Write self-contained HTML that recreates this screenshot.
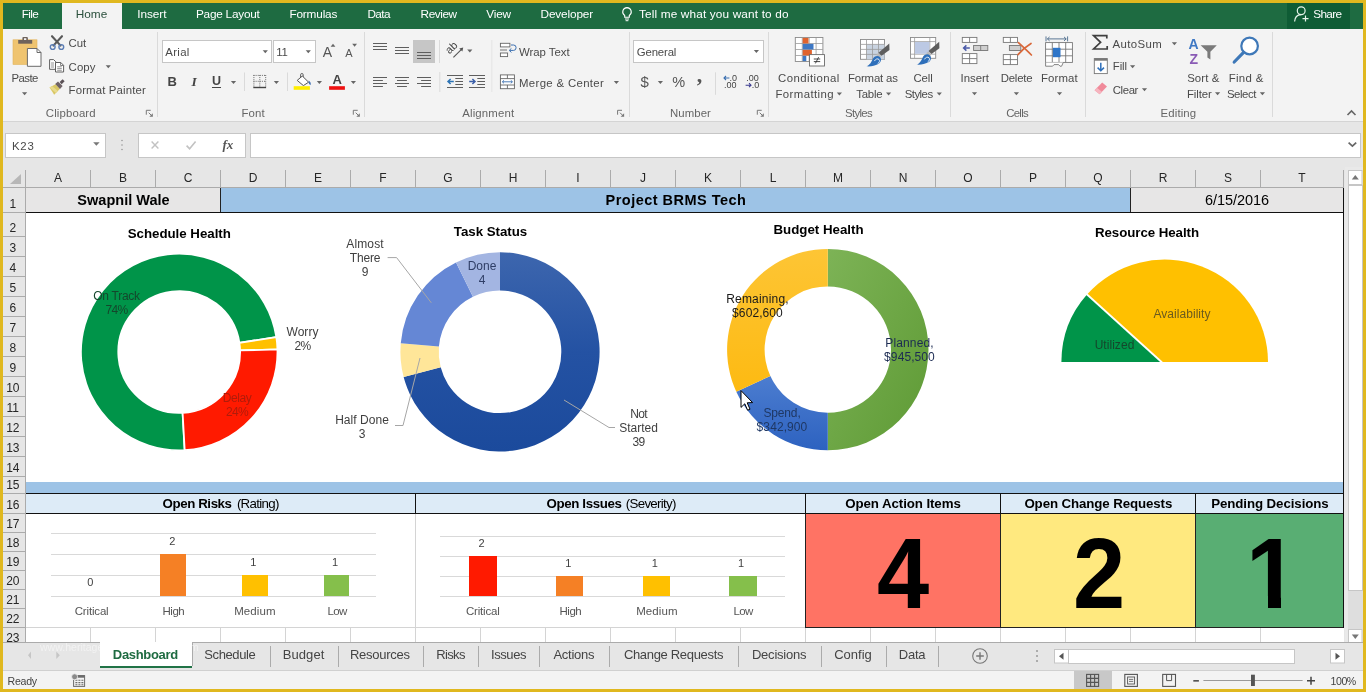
<!DOCTYPE html>
<html lang="en"><head><meta charset="utf-8"><title>Project BRMS Tech - Dashboard - Excel</title>
<style>
html,body{margin:0;padding:0;}
body{width:1366px;height:692px;overflow:hidden;background:#E0B81F;font-family:"Liberation Sans",sans-serif;}
#app{position:absolute;left:0;top:0;width:1366px;height:692px;overflow:hidden;will-change:transform;}
#app div,#app svg{position:absolute;}
.t{white-space:nowrap;}
</style></head>
<body>
<div id="app">
<div style="left:3.0px;top:3.0px;width:1360.0px;height:686.0px;background:#E6E6E6;"></div>
<div style="left:3.0px;top:3.0px;width:1360.0px;height:25.5px;background:#1E6B41;"></div>
<div style="left:3.0px;top:3.0px;width:59.0px;height:25.5px;background:#1F6E43;"></div>
<div style="left:62.0px;top:3.0px;width:60.0px;height:26.0px;background:#F3F3F3;"></div>
<div class="t" style="top:6.0px;font-size:11.8px;line-height:16px;color:#fff;letter-spacing:-0.683px;left:-120.1px;width:300px;text-align:center;"><span id="t1">File</span></div>
<div class="t" style="top:6.0px;font-size:11.8px;line-height:16px;color:#2A4F3C;letter-spacing:0.064px;left:-58.5px;width:300px;text-align:center;"><span id="t2">Home</span></div>
<div class="t" style="top:6.0px;font-size:11.8px;line-height:16px;color:#fff;letter-spacing:-0.065px;left:1.9px;width:300px;text-align:center;"><span id="t3">Insert</span></div>
<div class="t" style="top:6.0px;font-size:11.8px;line-height:16px;color:#fff;letter-spacing:-0.227px;left:77.8px;width:300px;text-align:center;"><span id="t4">Page Layout</span></div>
<div class="t" style="top:6.0px;font-size:11.8px;line-height:16px;color:#fff;letter-spacing:-0.166px;left:163.3px;width:300px;text-align:center;"><span id="t5">Formulas</span></div>
<div class="t" style="top:6.0px;font-size:11.8px;line-height:16px;color:#fff;letter-spacing:-0.586px;left:228.7px;width:300px;text-align:center;"><span id="t6">Data</span></div>
<div class="t" style="top:6.0px;font-size:11.8px;line-height:16px;color:#fff;letter-spacing:-0.452px;left:288.6px;width:300px;text-align:center;"><span id="t7">Review</span></div>
<div class="t" style="top:6.0px;font-size:11.8px;line-height:16px;color:#fff;letter-spacing:-0.179px;left:348.6px;width:300px;text-align:center;"><span id="t8">View</span></div>
<div class="t" style="top:6.0px;font-size:11.8px;line-height:16px;color:#fff;letter-spacing:-0.143px;left:416.8px;width:300px;text-align:center;"><span id="t9">Developer</span></div>
<div class="t" style="top:6.0px;font-size:11.8px;line-height:16px;color:#fff;letter-spacing:0.150px;left:639.0px;"><span id="t10">Tell me what you want to do</span></div>
<div style="left:1287.0px;top:3.0px;width:63.0px;height:25.5px;background:#0F5C35;"></div>
<div class="t" style="top:6.0px;font-size:11.8px;line-height:16px;color:#fff;letter-spacing:-0.700px;left:1313.3px;"><span id="t11">Share</span></div>
<div style="left:3.0px;top:28.5px;width:1360.0px;height:92.5px;background:#F3F3F3;"></div>
<div style="left:3.0px;top:120.5px;width:1360.0px;height:1.0px;background:#D4D4D4;"></div>
<div style="left:157.3px;top:32.0px;width:1.0px;height:85.0px;background:#DADADA;"></div>
<div style="left:363.5px;top:32.0px;width:1.0px;height:85.0px;background:#DADADA;"></div>
<div style="left:628.5px;top:32.0px;width:1.0px;height:85.0px;background:#DADADA;"></div>
<div style="left:768.3px;top:32.0px;width:1.0px;height:85.0px;background:#DADADA;"></div>
<div style="left:949.5px;top:32.0px;width:1.0px;height:85.0px;background:#DADADA;"></div>
<div style="left:1085.3px;top:32.0px;width:1.0px;height:85.0px;background:#DADADA;"></div>
<div style="left:1272.0px;top:32.0px;width:1.0px;height:85.0px;background:#DADADA;"></div>
<div class="t" style="top:70.0px;font-size:11.4px;line-height:16px;color:#4A4A4A;letter-spacing:-0.573px;left:-125.3px;width:300px;text-align:center;"><span id="t12">Paste</span></div>
<div class="t" style="top:35.4px;font-size:11.4px;line-height:16px;color:#4A4A4A;letter-spacing:-0.080px;left:68.6px;"><span id="t13">Cut</span></div>
<div class="t" style="top:59.0px;font-size:11.4px;line-height:16px;color:#4A4A4A;letter-spacing:0.101px;left:68.6px;"><span id="t14">Copy</span></div>
<div class="t" style="top:82.0px;font-size:11.4px;line-height:16px;color:#4A4A4A;letter-spacing:0.143px;left:68.6px;"><span id="t15">Format Painter</span></div>
<div class="t" style="top:104.8px;font-size:11.4px;line-height:16px;color:#666;letter-spacing:0.135px;left:45.8px;"><span id="t16">Clipboard</span></div>
<div style="left:162.3px;top:40.0px;width:110.2px;height:22.7px;background:#fff;border:1px solid #C6C6C6;box-sizing:border-box;"></div>
<div style="left:272.5px;top:40.0px;width:43.2px;height:22.7px;background:#fff;border:1px solid #C6C6C6;box-sizing:border-box;"></div>
<div class="t" style="top:43.8px;font-size:11.4px;line-height:16px;color:#4A4A4A;letter-spacing:0.311px;left:165.3px;"><span id="t17">Arial</span></div>
<div class="t" style="top:43.8px;font-size:11.4px;line-height:16px;color:#4A4A4A;letter-spacing:-0.189px;left:276.2px;"><span id="t18">11</span></div>
<div class="t" style="top:104.8px;font-size:11.4px;line-height:16px;color:#666;letter-spacing:0.124px;left:103.2px;width:300px;text-align:center;"><span id="t19">Font</span></div>
<div style="left:413.0px;top:40.0px;width:22.0px;height:23.0px;background:#C6C6C6;"></div>
<div class="t" style="top:44.0px;font-size:11.4px;line-height:16px;color:#4A4A4A;letter-spacing:-0.037px;left:519.0px;"><span id="t20">Wrap Text</span></div>
<div class="t" style="top:74.5px;font-size:11.4px;line-height:16px;color:#4A4A4A;letter-spacing:0.338px;left:519.0px;"><span id="t21">Merge &amp; Center</span></div>
<div class="t" style="top:104.8px;font-size:11.4px;line-height:16px;color:#666;letter-spacing:0.164px;left:338.3px;width:300px;text-align:center;"><span id="t22">Alignment</span></div>
<div style="left:633.2px;top:40.0px;width:130.4px;height:22.7px;background:#fff;border:1px solid #C6C6C6;box-sizing:border-box;"></div>
<div class="t" style="top:43.8px;font-size:11.4px;line-height:16px;color:#4A4A4A;letter-spacing:-0.165px;left:636.8px;"><span id="t23">General</span></div>
<div class="t" style="top:104.8px;font-size:11.4px;line-height:16px;color:#666;letter-spacing:0.056px;left:540.5px;width:300px;text-align:center;"><span id="t24">Number</span></div>
<div class="t" style="top:70.0px;font-size:11.4px;line-height:16px;color:#4A4A4A;letter-spacing:0.414px;left:658.9px;width:300px;text-align:center;"><span id="t25">Conditional</span></div>
<div class="t" style="top:85.6px;font-size:11.4px;line-height:16px;color:#4A4A4A;letter-spacing:0.400px;left:775.5px;"><span id="t26">Formatting</span></div>
<div class="t" style="top:70.0px;font-size:11.4px;line-height:16px;color:#4A4A4A;letter-spacing:-0.147px;left:722.9px;width:300px;text-align:center;"><span id="t27">Format as</span></div>
<div class="t" style="top:85.6px;font-size:11.4px;line-height:16px;color:#4A4A4A;letter-spacing:-0.224px;left:719.3px;width:300px;text-align:center;"><span id="t28">Table</span></div>
<div class="t" style="top:70.0px;font-size:11.4px;line-height:16px;color:#4A4A4A;letter-spacing:-0.131px;left:773.0px;width:300px;text-align:center;"><span id="t29">Cell</span></div>
<div class="t" style="top:85.6px;font-size:11.4px;line-height:16px;color:#4A4A4A;letter-spacing:-0.525px;left:904.7px;"><span id="t30">Styles</span></div>
<div class="t" style="top:104.8px;font-size:11.4px;line-height:16px;color:#666;letter-spacing:-0.700px;left:708.5px;width:300px;text-align:center;"><span id="t31">Styles</span></div>
<div class="t" style="top:70.0px;font-size:11.4px;line-height:16px;color:#4A4A4A;letter-spacing:-0.005px;left:824.8px;width:300px;text-align:center;"><span id="t32">Insert</span></div>
<div class="t" style="top:70.0px;font-size:11.4px;line-height:16px;color:#4A4A4A;letter-spacing:-0.218px;left:866.5px;width:300px;text-align:center;"><span id="t33">Delete</span></div>
<div class="t" style="top:70.0px;font-size:11.4px;line-height:16px;color:#4A4A4A;letter-spacing:0.118px;left:909.4px;width:300px;text-align:center;"><span id="t34">Format</span></div>
<div class="t" style="top:104.8px;font-size:11.4px;line-height:16px;color:#666;letter-spacing:-0.700px;left:867.1px;width:300px;text-align:center;"><span id="t35">Cells</span></div>
<div class="t" style="top:35.6px;font-size:11.4px;line-height:16px;color:#4A4A4A;letter-spacing:0.406px;left:1112.4px;"><span id="t36">AutoSum</span></div>
<div class="t" style="top:58.4px;font-size:11.4px;line-height:16px;color:#4A4A4A;letter-spacing:-0.106px;left:1112.8px;"><span id="t37">Fill</span></div>
<div class="t" style="top:81.7px;font-size:11.4px;line-height:16px;color:#4A4A4A;letter-spacing:-0.407px;left:1112.8px;"><span id="t38">Clear</span></div>
<div class="t" style="top:70.0px;font-size:11.4px;line-height:16px;color:#4A4A4A;letter-spacing:0.109px;left:1053.3px;width:300px;text-align:center;"><span id="t39">Sort &amp;</span></div>
<div class="t" style="top:85.6px;font-size:11.4px;line-height:16px;color:#4A4A4A;letter-spacing:-0.124px;left:1187.0px;"><span id="t40">Filter</span></div>
<div class="t" style="top:70.0px;font-size:11.4px;line-height:16px;color:#4A4A4A;letter-spacing:0.355px;left:1096.2px;width:300px;text-align:center;"><span id="t41">Find &amp;</span></div>
<div class="t" style="top:85.6px;font-size:11.4px;line-height:16px;color:#4A4A4A;letter-spacing:-0.439px;left:1226.9px;"><span id="t42">Select</span></div>
<div class="t" style="top:104.8px;font-size:11.4px;line-height:16px;color:#666;letter-spacing:0.118px;left:1028.4px;width:300px;text-align:center;"><span id="t43">Editing</span></div>
<div style="left:5.3px;top:132.5px;width:100.7px;height:25.0px;background:#fff;border:1px solid #C6C6C6;box-sizing:border-box;"></div>
<div class="t" style="top:137.6px;font-size:11.4px;line-height:16px;color:#4A4A4A;letter-spacing:0.734px;left:12.0px;"><span id="t44">K23</span></div>
<div style="left:137.6px;top:132.5px;width:108.2px;height:25.0px;background:#fff;border:1px solid #C6C6C6;box-sizing:border-box;"></div>
<div style="left:250.0px;top:132.5px;width:1110.5px;height:25.0px;background:#fff;border:1px solid #C6C6C6;box-sizing:border-box;"></div>
<div class="t" style="top:137.0px;font-size:13px;line-height:16px;color:#555;font-weight:bold;font-style:italic;font-family:'Liberation Serif',serif;left:222.5px;"><span id="t45">fx</span></div>
<svg style="left:0.0px;top:0.0px;" width="1366" height="170" viewBox="0 0 1366 170"><path d="M627 7.6 a4.3 4.3 0 0 1 2.3 7.9 v1.7 h-4.6 v-1.7 a4.3 4.3 0 0 1 2.3 -7.9 Z" fill="none" stroke="#fff" stroke-width="1.1"/><path d="M625 19 h4 M625.6 20.7 h2.8" stroke="#fff" stroke-width="1"/><circle cx="1301.2" cy="10.8" r="3.9" fill="none" stroke="#E8F5EC" stroke-width="1.2"/><path d="M1294.6 21.5 c0.3 -4.2 3 -6.6 6.4 -6.8" fill="none" stroke="#E8F5EC" stroke-width="1.2"/><path d="M1305.5 15.6 v6 M1302.5 18.6 h6" stroke="#E8F5EC" stroke-width="1.2"/><path d="M1347.5 115 L1351.5 111 L1355.5 115" fill="none" stroke="#666" stroke-width="1.6"/><rect x="13" y="39.8" width="24" height="24.7" fill="#EFC470"/><rect x="13" y="39.8" width="24" height="24.7" fill="none" stroke="#E2B45C" stroke-width="0.6"/><rect x="18.2" y="40" width="14" height="3.7" fill="#6F635C"/><rect x="22.4" y="37" width="5.5" height="4" rx="1" fill="#6F635C"/><rect x="24" y="38.2" width="2.3" height="1.8" fill="#F1F1F1"/><path d="M27.4 48.5 H37 L41 52.5 V66.3 H27.4 Z" fill="#fff" stroke="#6B6B6B" stroke-width="1"/><path d="M37 48.5 V52.5 H41" fill="none" stroke="#6B6B6B" stroke-width="1"/><path d="M22.0 92.2 H27.2 L24.6 95.2 Z" fill="#666"/><path d="M52 36.2 L60.6 45.6 M62 36.2 L53.4 45.6" stroke="#585858" stroke-width="2.1" stroke-linecap="round"/><circle cx="52.7" cy="47" r="2.4" fill="none" stroke="#5B7DB5" stroke-width="1.4"/><circle cx="61.3" cy="47" r="2.4" fill="none" stroke="#5B7DB5" stroke-width="1.4"/><path d="M49.6 59.6 H53.6 L55.8 61.8 V69.3 H49.6 Z" fill="#fff" stroke="#5F5F5F" stroke-width="1"/><path d="M51 63 h3 M51 65 h3 M51 67 h3" stroke="#7a7a7a" stroke-width="0.8"/><path d="M55.5 62.5 H60.8 L63.6 65.3 V72 H55.5 Z" fill="#fff" stroke="#5F5F5F" stroke-width="1"/><path d="M60.6 62.7 V65.5 H63.4" fill="none" stroke="#5F5F5F" stroke-width="0.8"/><path d="M57.2 66.8 h4.6 M57.2 68.6 h4.6 M57.2 70.3 h4.6" stroke="#7a7a7a" stroke-width="0.8"/><path d="M105.7 65.2 H110.9 L108.3 68.2 Z" fill="#666"/><path d="M49.5 87.5 L55.5 84.2 L60 88.8 L54.2 94.8 Z" fill="#D9C765"/><path d="M49.5 87.5 L52 86.1 L57.8 91 L56 93 Z" fill="#E8DB8E"/><path d="M55.2 84 L58 81.4 L62.6 86 L60 88.9 Z" fill="#6E6266"/><path d="M59.6 82 L62.6 79.2 L64.6 81.2 L61.7 84.2 Z" fill="#5B5156"/><path d="M146.3 114.7 V110.3 H150.7" fill="none" stroke="#777" stroke-width="1"/><path d="M148.7 112.7 L152.1 116.1" stroke="#777" stroke-width="1"/><path d="M152.8 113.3 V116.8 H149.3 Z" fill="#777"/><path d="M262.7 50.3 H267.9 L265.3 53.3 Z" fill="#666"/><path d="M305.7 50.3 H310.9 L308.3 53.3 Z" fill="#666"/><path d="M230.9 81.1 H236.1 L233.5 84.1 Z" fill="#666"/><path d="M273.8 81.1 H279.0 L276.4 84.1 Z" fill="#666"/><path d="M316.8 81.1 H322.0 L319.4 84.1 Z" fill="#666"/><path d="M350.8 81.1 H356.0 L353.4 84.1 Z" fill="#666"/><path d="M333 43.8 l2.4 3 h-4.8 Z" fill="#666"/><path d="M354.6 46.8 l2.4 -3 h-4.8 Z" fill="#666"/><rect x="244" y="72.5" width="1" height="18.5" fill="#DADADA"/><rect x="287" y="72.5" width="1" height="18.5" fill="#DADADA"/><g stroke="#6b6b6b" stroke-width="1" stroke-dasharray="1 1.1"><path d="M253.5 75.4 H266 M253.5 81.3 H266 M253.9 75 V87 M259.8 75 V87 M265.7 75 V87"/></g><rect x="253.3" y="86.8" width="12.8" height="1.4" fill="#444"/><path d="M302.3 76 L308.6 82.2 L303.4 85.6 L297.2 80.4 Z" fill="#fff" stroke="#555" stroke-width="1"/><path d="M300.6 77.8 V74.8 a1.3 1.3 0 0 1 2.6 0 V77" fill="none" stroke="#555" stroke-width="0.9"/><path d="M308.6 80.4 c1.8 1.2 2.6 2.8 2 4.6 c-1.4 -0.4 -2.2 -2 -2 -4.6 Z" fill="#3D6FB4"/><rect x="293.7" y="86.2" width="16.2" height="3.6" fill="#FFEE00"/><rect x="329.1" y="86.2" width="15.8" height="3.6" fill="#EE1111"/><path d="M353.3 114.7 V110.3 H357.7" fill="none" stroke="#777" stroke-width="1"/><path d="M355.7 112.7 L359.1 116.1" stroke="#777" stroke-width="1"/><path d="M359.8 113.3 V116.8 H356.3 Z" fill="#777"/><rect x="373.0" y="43" width="14.0" height="1" fill="#5E5E5E"/><rect x="373.0" y="46" width="14.0" height="1" fill="#5E5E5E"/><rect x="373.0" y="49" width="14.0" height="1" fill="#5E5E5E"/><rect x="395.0" y="47" width="14.0" height="1" fill="#5E5E5E"/><rect x="395.0" y="50" width="14.0" height="1" fill="#5E5E5E"/><rect x="395.0" y="53" width="14.0" height="1" fill="#5E5E5E"/><rect x="417.0" y="52" width="14.0" height="1" fill="#5E5E5E"/><rect x="417.0" y="55" width="14.0" height="1" fill="#5E5E5E"/><rect x="417.0" y="58" width="14.0" height="1" fill="#5E5E5E"/><rect x="373.0" y="77" width="14.0" height="1" fill="#5E5E5E"/><rect x="373.0" y="80" width="9.9" height="1" fill="#5E5E5E"/><rect x="373.0" y="83" width="14.0" height="1" fill="#5E5E5E"/><rect x="373.0" y="86" width="9.9" height="1" fill="#5E5E5E"/><rect x="395.0" y="77" width="14.0" height="1" fill="#5E5E5E"/><rect x="397.0" y="80" width="9.9" height="1" fill="#5E5E5E"/><rect x="395.0" y="83" width="14.0" height="1" fill="#5E5E5E"/><rect x="397.0" y="86" width="9.9" height="1" fill="#5E5E5E"/><rect x="417.0" y="77" width="14.0" height="1" fill="#5E5E5E"/><rect x="421.1" y="80" width="9.9" height="1" fill="#5E5E5E"/><rect x="417.0" y="83" width="14.0" height="1" fill="#5E5E5E"/><rect x="421.1" y="86" width="9.9" height="1" fill="#5E5E5E"/><rect x="439" y="40" width="1" height="23" fill="#DADADA"/><rect x="439.3" y="72" width="1" height="20" fill="#DADADA"/><rect x="491.3" y="40" width="1" height="52" fill="#E4E4E4"/><path d="M453.4 57.4 L462 48.8" stroke="#555" stroke-width="1.1"/><path d="M463.2 47.6 L459.2 48.4 L462.4 51.6 Z" fill="#555"/><path d="M467.2 49.5 H472.4 L469.8 52.5 Z" fill="#666"/><rect x="447.0" y="75" width="16.0" height="1" fill="#5E5E5E"/><rect x="447.0" y="87" width="16.0" height="1" fill="#5E5E5E"/><rect x="455.3" y="78" width="7.7" height="1" fill="#5E5E5E"/><rect x="455.3" y="81" width="7.7" height="1" fill="#5E5E5E"/><rect x="455.3" y="84" width="7.7" height="1" fill="#5E5E5E"/><path d="M453.8 81.5 H448.2 M450.6 79 L448 81.5 L450.6 84" fill="none" stroke="#2E75B6" stroke-width="1.5"/><rect x="469.0" y="75" width="16.0" height="1" fill="#5E5E5E"/><rect x="469.0" y="87" width="16.0" height="1" fill="#5E5E5E"/><rect x="477.3" y="78" width="7.7" height="1" fill="#5E5E5E"/><rect x="477.3" y="81" width="7.7" height="1" fill="#5E5E5E"/><rect x="477.3" y="84" width="7.7" height="1" fill="#5E5E5E"/><path d="M469.2 81.5 H474.8 M472.4 79 L475 81.5 L472.4 84" fill="none" stroke="#3B5FA8" stroke-width="1.5"/><rect x="500.4" y="43.3" width="9.5" height="3.6" fill="#fff" stroke="#666" stroke-width="0.9"/><rect x="500.4" y="53" width="7.2" height="3.6" fill="#fff" stroke="#666" stroke-width="0.9"/><path d="M500 50 H507" stroke="#666" stroke-width="0.9"/><path d="M511 45 H513.6 a2.4 2.6 0 0 1 0 5.4 H510" fill="none" stroke="#3B6FB0" stroke-width="1"/><path d="M511.4 48.4 L509.2 50.4 L511.4 52.4" fill="none" stroke="#3B6FB0" stroke-width="1"/><rect x="500.4" y="74.9" width="14" height="13.8" fill="#fff" stroke="#666" stroke-width="0.9"/><path d="M500.4 78.6 H514.4 M500.4 85 H514.4 M507.4 74.9 V78.6 M507.4 85 V88.7" stroke="#666" stroke-width="0.9"/><path d="M502.4 81.8 H512.4 M504 80.3 L502.4 81.8 L504 83.3 M510.8 80.3 L512.4 81.8 L510.8 83.3" fill="none" stroke="#3B6FB0" stroke-width="0.9"/><path d="M613.8 81.1 H619.0 L616.4 84.1 Z" fill="#666"/><path d="M617.5999999999999 114.7 V110.3 H622.0" fill="none" stroke="#777" stroke-width="1"/><path d="M620.0 112.7 L623.4 116.1" stroke="#777" stroke-width="1"/><path d="M624.0999999999999 113.3 V116.8 H620.5999999999999 Z" fill="#777"/><path d="M753.8 50.1 H759.0 L756.4 53.1 Z" fill="#666"/><path d="M657.8 80.9 H663.0 L660.4 83.9 Z" fill="#666"/><rect x="715" y="72.3" width="1" height="22.5" fill="#DADADA"/><path d="M724 78 H729.4 M726 76 L724 78 L726 80" fill="none" stroke="#3B6FB0" stroke-width="1.1"/><path d="M745.6 85.2 H751 M749 83.2 L751 85.2 L749 87.2" fill="none" stroke="#3B3B90" stroke-width="1.1"/><path d="M757.3 114.7 V110.3 H761.7" fill="none" stroke="#777" stroke-width="1"/><path d="M759.7 112.7 L763.1 116.1" stroke="#777" stroke-width="1"/><path d="M763.8 113.3 V116.8 H760.3 Z" fill="#777"/><rect x="795.3" y="37.5" width="27.6" height="24" fill="#fff" stroke="#8a8a8a" stroke-width="0.9"/><path d="M795.3 43.5 h27.6 M795.3 49.5 h27.6 M795.3 55.5 h27.6 M802.3 37.5 v24 M809.2 37.5 v24 M816.1 37.5 v24" stroke="#9a9a9a" stroke-width="0.8"/><rect x="802.7" y="37.9" width="5.8" height="5.6" fill="#E0632D"/><rect x="802.7" y="43.9" width="10.8" height="5.6" fill="#3E78C4"/><rect x="802.7" y="49.9" width="9.2" height="5.6" fill="#E0632D"/><rect x="802.7" y="55.9" width="3.6" height="5.2" fill="#3E78C4"/><rect x="809.5" y="54.6" width="15" height="11.4" fill="#fff" stroke="#6b6b6b" stroke-width="0.9"/><path d="M813.8 59 h6.4 M813.8 61.6 h6.4 M818.6 57.2 L815.4 63.4" stroke="#333" stroke-width="0.9"/><path d="M836.8 92.5 H842.0 L839.4 95.5 Z" fill="#666"/><rect x="860.5" y="39.5" width="24" height="19.8" fill="#fff" stroke="#8a8a8a" stroke-width="0.9"/><rect x="866.5" y="44.4" width="18" height="14.9" fill="#C9D3E0"/><path d="M860.5 44.4 h24 M860.5 49.4 h24 M860.5 54.4 h24 M866.5 39.5 v19.8 M872.5 39.5 v19.8 M878.5 39.5 v19.8" stroke="#9a9a9a" stroke-width="0.8"/><path d="M889.3 43.5 L889.5 50.0 L881.5 55.8 L878.5 52.8 Z" fill="#5E5E5E"/><path d="M881.2 56.099999999999994 L878.2 53.099999999999994 L876.2 54.9 L879.4 58.099999999999994 Z" fill="#B9B9B9"/><path d="M866.5 66.3 c3.5 -1 5.2 -4.8 6.2 -7.2 c1.4 -3.2 5.2 -4 7.2 -2 c2 2 1.2 5.6 -2 7.2 c-2.8 1.4 -7 2.4 -11.4 2 Z" fill="#2E6FBA"/><path d="M874.4 61.099999999999994 c1.2 -2.4 3.4 -2.8 4.6 -1.6 c1 1.2 0.4 3.2 -1.4 4.2" fill="none" stroke="#DDE9F6" stroke-width="1"/><path d="M886.0 92.5 H891.2 L888.6 95.5 Z" fill="#666"/><rect x="910.5" y="37.5" width="25.2" height="20.8" fill="#fff" stroke="#8a8a8a" stroke-width="0.9"/><path d="M910.5 41.6 h25.2 M910.5 54.2 h25.2 M914.6 37.5 v20.8 M929.8 37.5 v20.8" stroke="#9a9a9a" stroke-width="0.8"/><rect x="915" y="42" width="14.4" height="11.8" fill="#BCC9E4"/><path d="M939.2 41.8 L939.4000000000001 48.3 L931.5 54.099999999999994 L928.5 51.099999999999994 Z" fill="#5E5E5E"/><path d="M931.2 54.39999999999999 L928.2 51.39999999999999 L926.2 53.199999999999996 L929.4 56.39999999999999 Z" fill="#B9B9B9"/><path d="M916.5 64.6 c3.5 -1 5.2 -4.8 6.2 -7.2 c1.4 -3.2 5.2 -4 7.2 -2 c2 2 1.2 5.6 -2 7.2 c-2.8 1.4 -7 2.4 -11.4 2 Z" fill="#2E6FBA"/><path d="M924.4 59.39999999999999 c1.2 -2.4 3.4 -2.8 4.6 -1.6 c1 1.2 0.4 3.2 -1.4 4.2" fill="none" stroke="#DDE9F6" stroke-width="1"/><path d="M936.7 92.5 H941.9 L939.3 95.5 Z" fill="#666"/><rect x="962.3" y="37.4" width="14.6" height="5" fill="#fff" stroke="#777" stroke-width="0.9"/><path d="M969.6 37.4 v5" stroke="#777" stroke-width="0.9"/><rect x="973.6" y="45.5" width="14.2" height="5" fill="#CFCFCF" stroke="#777" stroke-width="0.9"/><path d="M980.7 45.5 v5" stroke="#777" stroke-width="0.9"/><rect x="962.3" y="53.6" width="14.6" height="10" fill="#fff" stroke="#777" stroke-width="0.9"/><path d="M969.6 53.6 v10" stroke="#777" stroke-width="0.9"/><path d="M962.3 58.6 h14.6" stroke="#777" stroke-width="0.9"/><path d="M969.8 48 H963.8 M966.4 45.4 L963.6 48 L966.4 50.6" fill="none" stroke="#4A5AA8" stroke-width="1.5"/><rect x="1003.3" y="37.4" width="14.2" height="5" fill="#fff" stroke="#777" stroke-width="0.9"/><path d="M1010.4 37.4 v5" stroke="#777" stroke-width="0.9"/><rect x="1009.4" y="45.5" width="11.4" height="5" fill="#CFCFCF" stroke="#777" stroke-width="0.9"/><rect x="1003.3" y="54.6" width="14.2" height="10" fill="#fff" stroke="#777" stroke-width="0.9"/><path d="M1010.4 54.6 v10" stroke="#777" stroke-width="0.9"/><path d="M1003.3 59.6 h14.2" stroke="#777" stroke-width="0.9"/><path d="M1018.4 42.6 C1022 46 1027 50.6 1031.4 55 M1031 43.5 C1026 46.5 1021.4 50.6 1018 54.6" fill="none" stroke="#D9683A" stroke-width="1.7" stroke-linecap="round"/><rect x="1045.6" y="42.6" width="26.8" height="19.8" fill="#fff" stroke="#777" stroke-width="0.9"/><path d="M1052.3 42.6 v19.8" stroke="#777" stroke-width="0.9"/><path d="M1059.0 42.6 v19.8" stroke="#777" stroke-width="0.9"/><path d="M1065.7 42.6 v19.8" stroke="#777" stroke-width="0.9"/><path d="M1045.6 49.2 h26.8" stroke="#777" stroke-width="0.9"/><path d="M1045.6 55.8 h26.8" stroke="#777" stroke-width="0.9"/><rect x="1052.9" y="47.8" width="7.6" height="9.4" fill="#2E75C8"/><path d="M1045.6 62.4 V66.2 H1052.6 L1054 64.6 H1058.6 L1060 66.2 H1061.6 L1063.2 62.6" fill="#fff" stroke="#777" stroke-width="0.9"/><path d="M1046 36.4 v5 M1067.6 36.4 v5 M1047.4 38.9 H1066.2 M1049.6 36.9 L1047.4 38.9 L1049.6 40.9 M1064 36.9 L1066.2 38.9 L1064 40.9" fill="none" stroke="#4A6A8A" stroke-width="0.9"/><path d="M971.9 92.2 H977.1 L974.5 95.2 Z" fill="#666"/><path d="M1013.8 92.2 H1019.0 L1016.4 95.2 Z" fill="#666"/><path d="M1056.9 92.2 H1062.1 L1059.5 95.2 Z" fill="#666"/><path d="M1106.8 38.5 V35.6 H1093.6 L1100.6 42.3 L1093.6 49 H1107.2 V46" fill="none" stroke="#3F3F3F" stroke-width="1.7"/><path d="M1171.8 42.3 H1177.0 L1174.4 45.3 Z" fill="#666"/><rect x="1094.3" y="58.6" width="13" height="15" fill="#fff" stroke="#777" stroke-width="0.9"/><rect x="1094.3" y="58.3" width="13" height="2.4" fill="#777"/><path d="M1100.8 62.8 V70.6 M1097.6 67.6 L1100.8 70.8 L1104 67.6" fill="none" stroke="#2E6FBA" stroke-width="1.5"/><path d="M1130.0 65.2 H1135.2 L1132.6 68.2 Z" fill="#666"/><path d="M1102.2 82.4 L1107 86.4 L1099.6 94.2 L1094.6 90.2 Z" fill="#F08A9A"/><path d="M1096.9 87.8 L1101.9 91.8 L1099.6 94.2 L1094.6 90.2 Z" fill="#F6B5BF"/><path d="M1141.9 88.3 H1147.1 L1144.5 91.3 Z" fill="#666"/><path d="M1200.6 45.2 H1216.8 L1210.4 51.8 V59.4 L1207.4 57.6 V51.8 Z" fill="#7A7A7A"/><path d="M1215.0 92.2 H1220.2 L1217.6 95.2 Z" fill="#666"/><circle cx="1249.6" cy="46" r="8.3" fill="#fff" stroke="#3E78B8" stroke-width="2.2"/><path d="M1243.6 52.4 L1234.2 62" stroke="#3E78B8" stroke-width="3.2" stroke-linecap="round"/><path d="M1259.8 92.2 H1265.0 L1262.4 95.2 Z" fill="#666"/><path d="M93.2 142.2 H99.6 L96.4 145.8 Z" fill="#777"/><circle cx="122" cy="140.5" r="0.8" fill="#999"/><circle cx="122" cy="145" r="0.8" fill="#999"/><circle cx="122" cy="149.5" r="0.8" fill="#999"/><path d="M151.6 141.4 L158.4 148.6 M158.4 141.4 L151.6 148.6" stroke="#C2C2C2" stroke-width="1.4"/><path d="M186.6 145.6 L189.6 148.8 L195.6 141.4" fill="none" stroke="#C2C2C2" stroke-width="1.6"/><path d="M1348.6 142.6 L1352.4 146.2 L1356.2 142.6" fill="none" stroke="#666" stroke-width="1.7"/></svg>
<div class="t" style="top:73.8px;font-size:13px;line-height:16px;color:#444;font-weight:bold;left:22.2px;width:300px;text-align:center;"><span id="t46">B</span></div>
<div class="t" style="top:73.8px;font-size:13.5px;line-height:16px;color:#444;font-weight:bold;font-style:italic;font-family:'Liberation Serif',serif;left:44.2px;width:300px;text-align:center;"><span id="t47">I</span></div>
<div class="t" style="top:73.4px;font-size:12.5px;line-height:16px;color:#444;font-weight:bold;left:66.5px;width:300px;text-align:center;text-decoration:underline;text-underline-offset:2px;"><span id="t48">U</span></div>
<div class="t" style="top:44.0px;font-size:14px;line-height:16px;color:#555;left:177.3px;width:300px;text-align:center;"><span id="t49">A</span></div>
<div class="t" style="top:45.2px;font-size:11px;line-height:16px;color:#555;left:199.0px;width:300px;text-align:center;"><span id="t50">A</span></div>
<div class="t" style="top:72.3px;font-size:13px;line-height:16px;color:#444;font-weight:bold;left:187.3px;width:300px;text-align:center;"><span id="t51">A</span></div>
<div class="t" style="top:73.6px;font-size:15px;line-height:16px;color:#555;left:494.7px;width:300px;text-align:center;"><span id="t52">$</span></div>
<div class="t" style="top:74.0px;font-size:14.5px;line-height:16px;color:#555;left:528.6px;width:300px;text-align:center;"><span id="t53">%</span></div>
<div class="t" style="top:66.5px;font-size:22px;line-height:16px;color:#555;font-weight:bold;font-family:'Liberation Serif',serif;left:549.5px;width:300px;text-align:center;"><span id="t54">,</span></div>
<div class="t" style="top:70.0px;font-size:9px;line-height:16px;color:#444;left:583.3px;width:300px;text-align:center;"><span id="t55">.0</span></div>
<div class="t" style="top:76.8px;font-size:9px;line-height:16px;color:#444;left:580.3px;width:300px;text-align:center;"><span id="t56">.00</span></div>
<div class="t" style="top:70.0px;font-size:9px;line-height:16px;color:#444;left:602.4px;width:300px;text-align:center;"><span id="t57">.00</span></div>
<div class="t" style="top:76.8px;font-size:9px;line-height:16px;color:#444;left:605.4px;width:300px;text-align:center;"><span id="t58">.0</span></div>
<div class="t" style="top:35.6px;font-size:14px;line-height:16px;color:#3E78C4;font-weight:bold;left:1043.5px;width:300px;text-align:center;"><span id="t59">A</span></div>
<div class="t" style="top:50.6px;font-size:14px;line-height:16px;color:#8A5BB5;font-weight:bold;left:1043.7px;width:300px;text-align:center;"><span id="t60">Z</span></div>
<div class="t" style="left:451px;top:45.4px;font-size:11px;line-height:11px;color:#444;transform:rotate(-45deg);transform-origin:0 100%;">ab</div>
<div style="left:25.5px;top:187.5px;width:1318.0px;height:455.0px;background:#fff;"></div>
<div style="left:3.0px;top:167.0px;width:1341.0px;height:20.5px;background:#E6E6E6;"></div>
<div class="t" style="top:170.0px;font-size:12px;line-height:16px;color:#262626;left:-92.0px;width:300px;text-align:center;"><span id="t61">A</span></div>
<div style="left:90.0px;top:170.0px;width:1.0px;height:17.0px;background:#ABABAB;"></div>
<div class="t" style="top:170.0px;font-size:12px;line-height:16px;color:#262626;left:-27.0px;width:300px;text-align:center;"><span id="t62">B</span></div>
<div style="left:155.0px;top:170.0px;width:1.0px;height:17.0px;background:#ABABAB;"></div>
<div class="t" style="top:170.0px;font-size:12px;line-height:16px;color:#262626;left:38.0px;width:300px;text-align:center;"><span id="t63">C</span></div>
<div style="left:220.0px;top:170.0px;width:1.0px;height:17.0px;background:#ABABAB;"></div>
<div class="t" style="top:170.0px;font-size:12px;line-height:16px;color:#262626;left:103.0px;width:300px;text-align:center;"><span id="t64">D</span></div>
<div style="left:285.0px;top:170.0px;width:1.0px;height:17.0px;background:#ABABAB;"></div>
<div class="t" style="top:170.0px;font-size:12px;line-height:16px;color:#262626;left:168.0px;width:300px;text-align:center;"><span id="t65">E</span></div>
<div style="left:350.0px;top:170.0px;width:1.0px;height:17.0px;background:#ABABAB;"></div>
<div class="t" style="top:170.0px;font-size:12px;line-height:16px;color:#262626;left:233.0px;width:300px;text-align:center;"><span id="t66">F</span></div>
<div style="left:415.0px;top:170.0px;width:1.0px;height:17.0px;background:#ABABAB;"></div>
<div class="t" style="top:170.0px;font-size:12px;line-height:16px;color:#262626;left:298.0px;width:300px;text-align:center;"><span id="t67">G</span></div>
<div style="left:480.0px;top:170.0px;width:1.0px;height:17.0px;background:#ABABAB;"></div>
<div class="t" style="top:170.0px;font-size:12px;line-height:16px;color:#262626;left:363.0px;width:300px;text-align:center;"><span id="t68">H</span></div>
<div style="left:545.0px;top:170.0px;width:1.0px;height:17.0px;background:#ABABAB;"></div>
<div class="t" style="top:170.0px;font-size:12px;line-height:16px;color:#262626;left:428.0px;width:300px;text-align:center;"><span id="t69">I</span></div>
<div style="left:610.0px;top:170.0px;width:1.0px;height:17.0px;background:#ABABAB;"></div>
<div class="t" style="top:170.0px;font-size:12px;line-height:16px;color:#262626;left:493.0px;width:300px;text-align:center;"><span id="t70">J</span></div>
<div style="left:675.0px;top:170.0px;width:1.0px;height:17.0px;background:#ABABAB;"></div>
<div class="t" style="top:170.0px;font-size:12px;line-height:16px;color:#262626;left:558.0px;width:300px;text-align:center;"><span id="t71">K</span></div>
<div style="left:740.0px;top:170.0px;width:1.0px;height:17.0px;background:#ABABAB;"></div>
<div class="t" style="top:170.0px;font-size:12px;line-height:16px;color:#262626;left:623.0px;width:300px;text-align:center;"><span id="t72">L</span></div>
<div style="left:805.0px;top:170.0px;width:1.0px;height:17.0px;background:#ABABAB;"></div>
<div class="t" style="top:170.0px;font-size:12px;line-height:16px;color:#262626;left:688.0px;width:300px;text-align:center;"><span id="t73">M</span></div>
<div style="left:870.0px;top:170.0px;width:1.0px;height:17.0px;background:#ABABAB;"></div>
<div class="t" style="top:170.0px;font-size:12px;line-height:16px;color:#262626;left:753.0px;width:300px;text-align:center;"><span id="t74">N</span></div>
<div style="left:935.0px;top:170.0px;width:1.0px;height:17.0px;background:#ABABAB;"></div>
<div class="t" style="top:170.0px;font-size:12px;line-height:16px;color:#262626;left:818.0px;width:300px;text-align:center;"><span id="t75">O</span></div>
<div style="left:1000.0px;top:170.0px;width:1.0px;height:17.0px;background:#ABABAB;"></div>
<div class="t" style="top:170.0px;font-size:12px;line-height:16px;color:#262626;left:883.0px;width:300px;text-align:center;"><span id="t76">P</span></div>
<div style="left:1065.0px;top:170.0px;width:1.0px;height:17.0px;background:#ABABAB;"></div>
<div class="t" style="top:170.0px;font-size:12px;line-height:16px;color:#262626;left:948.0px;width:300px;text-align:center;"><span id="t77">Q</span></div>
<div style="left:1130.0px;top:170.0px;width:1.0px;height:17.0px;background:#ABABAB;"></div>
<div class="t" style="top:170.0px;font-size:12px;line-height:16px;color:#262626;left:1013.0px;width:300px;text-align:center;"><span id="t78">R</span></div>
<div style="left:1195.0px;top:170.0px;width:1.0px;height:17.0px;background:#ABABAB;"></div>
<div class="t" style="top:170.0px;font-size:12px;line-height:16px;color:#262626;left:1078.0px;width:300px;text-align:center;"><span id="t79">S</span></div>
<div style="left:1260.0px;top:170.0px;width:1.0px;height:17.0px;background:#ABABAB;"></div>
<div class="t" style="top:170.0px;font-size:12px;line-height:16px;color:#262626;left:1152.0px;width:300px;text-align:center;"><span id="t80">T</span></div>
<div style="left:1343.0px;top:170.0px;width:1.0px;height:17.0px;background:#ABABAB;"></div>
<div style="left:25.0px;top:170.0px;width:1.0px;height:17.0px;background:#ABABAB;"></div>
<div style="left:3.0px;top:187.0px;width:1341.0px;height:1.0px;background:#ABABAB;"></div>
<svg style="left:9.0px;top:174.0px;" width="13" height="11" viewBox="0 0 13 11"><path d="M12 0 L12 10 L1 10 Z" fill="#B7B7B7"/></svg>
<div style="left:3.0px;top:187.5px;width:22.5px;height:455.0px;background:#E6E6E6;"></div>
<div style="left:25.0px;top:187.5px;width:1.0px;height:455.0px;background:#ABABAB;"></div>
<div class="t" style="top:195.8px;font-size:12px;line-height:16px;color:#262626;left:-137.2px;width:300px;text-align:center;"><span id="t81">1</span></div>
<div style="left:3.0px;top:211.5px;width:22.5px;height:1.0px;background:#ABABAB;"></div>
<div class="t" style="top:220.2px;font-size:12px;line-height:16px;color:#262626;left:-137.2px;width:300px;text-align:center;"><span id="t82">2</span></div>
<div style="left:3.0px;top:235.9px;width:22.5px;height:1.0px;background:#ABABAB;"></div>
<div class="t" style="top:240.2px;font-size:12px;line-height:16px;color:#262626;left:-137.2px;width:300px;text-align:center;"><span id="t83">3</span></div>
<div style="left:3.0px;top:255.9px;width:22.5px;height:1.0px;background:#ABABAB;"></div>
<div class="t" style="top:260.2px;font-size:12px;line-height:16px;color:#262626;left:-137.2px;width:300px;text-align:center;"><span id="t84">4</span></div>
<div style="left:3.0px;top:275.9px;width:22.5px;height:1.0px;background:#ABABAB;"></div>
<div class="t" style="top:280.2px;font-size:12px;line-height:16px;color:#262626;left:-137.2px;width:300px;text-align:center;"><span id="t85">5</span></div>
<div style="left:3.0px;top:295.9px;width:22.5px;height:1.0px;background:#ABABAB;"></div>
<div class="t" style="top:300.2px;font-size:12px;line-height:16px;color:#262626;left:-137.2px;width:300px;text-align:center;"><span id="t86">6</span></div>
<div style="left:3.0px;top:315.9px;width:22.5px;height:1.0px;background:#ABABAB;"></div>
<div class="t" style="top:320.2px;font-size:12px;line-height:16px;color:#262626;left:-137.2px;width:300px;text-align:center;"><span id="t87">7</span></div>
<div style="left:3.0px;top:335.9px;width:22.5px;height:1.0px;background:#ABABAB;"></div>
<div class="t" style="top:340.2px;font-size:12px;line-height:16px;color:#262626;left:-137.2px;width:300px;text-align:center;"><span id="t88">8</span></div>
<div style="left:3.0px;top:355.9px;width:22.5px;height:1.0px;background:#ABABAB;"></div>
<div class="t" style="top:360.2px;font-size:12px;line-height:16px;color:#262626;left:-137.2px;width:300px;text-align:center;"><span id="t89">9</span></div>
<div style="left:3.0px;top:375.9px;width:22.5px;height:1.0px;background:#ABABAB;"></div>
<div class="t" style="top:380.2px;font-size:12px;line-height:16px;color:#262626;left:-137.2px;width:300px;text-align:center;"><span id="t90">10</span></div>
<div style="left:3.0px;top:395.9px;width:22.5px;height:1.0px;background:#ABABAB;"></div>
<div class="t" style="top:400.2px;font-size:12px;line-height:16px;color:#262626;left:-137.2px;width:300px;text-align:center;"><span id="t91">11</span></div>
<div style="left:3.0px;top:415.9px;width:22.5px;height:1.0px;background:#ABABAB;"></div>
<div class="t" style="top:420.2px;font-size:12px;line-height:16px;color:#262626;left:-137.2px;width:300px;text-align:center;"><span id="t92">12</span></div>
<div style="left:3.0px;top:435.9px;width:22.5px;height:1.0px;background:#ABABAB;"></div>
<div class="t" style="top:440.2px;font-size:12px;line-height:16px;color:#262626;left:-137.2px;width:300px;text-align:center;"><span id="t93">13</span></div>
<div style="left:3.0px;top:455.9px;width:22.5px;height:1.0px;background:#ABABAB;"></div>
<div class="t" style="top:460.2px;font-size:12px;line-height:16px;color:#262626;left:-137.2px;width:300px;text-align:center;"><span id="t94">14</span></div>
<div style="left:3.0px;top:475.9px;width:22.5px;height:1.0px;background:#ABABAB;"></div>
<div class="t" style="top:477.4px;font-size:12px;line-height:16px;color:#262626;left:-137.2px;width:300px;text-align:center;"><span id="t95">15</span></div>
<div style="left:3.0px;top:493.1px;width:22.5px;height:1.0px;background:#ABABAB;"></div>
<div class="t" style="top:497.3px;font-size:12px;line-height:16px;color:#262626;left:-137.2px;width:300px;text-align:center;"><span id="t96">16</span></div>
<div style="left:3.0px;top:513.0px;width:22.5px;height:1.0px;background:#ABABAB;"></div>
<div class="t" style="top:516.3px;font-size:12px;line-height:16px;color:#262626;left:-137.2px;width:300px;text-align:center;"><span id="t97">17</span></div>
<div style="left:3.0px;top:532.0px;width:22.5px;height:1.0px;background:#ABABAB;"></div>
<div class="t" style="top:535.3px;font-size:12px;line-height:16px;color:#262626;left:-137.2px;width:300px;text-align:center;"><span id="t98">18</span></div>
<div style="left:3.0px;top:551.0px;width:22.5px;height:1.0px;background:#ABABAB;"></div>
<div class="t" style="top:554.3px;font-size:12px;line-height:16px;color:#262626;left:-137.2px;width:300px;text-align:center;"><span id="t99">19</span></div>
<div style="left:3.0px;top:570.0px;width:22.5px;height:1.0px;background:#ABABAB;"></div>
<div class="t" style="top:573.3px;font-size:12px;line-height:16px;color:#262626;left:-137.2px;width:300px;text-align:center;"><span id="t100">20</span></div>
<div style="left:3.0px;top:589.0px;width:22.5px;height:1.0px;background:#ABABAB;"></div>
<div class="t" style="top:592.3px;font-size:12px;line-height:16px;color:#262626;left:-137.2px;width:300px;text-align:center;"><span id="t101">21</span></div>
<div style="left:3.0px;top:608.0px;width:22.5px;height:1.0px;background:#ABABAB;"></div>
<div class="t" style="top:611.3px;font-size:12px;line-height:16px;color:#262626;left:-137.2px;width:300px;text-align:center;"><span id="t102">22</span></div>
<div style="left:3.0px;top:627.0px;width:22.5px;height:1.0px;background:#ABABAB;"></div>
<div class="t" style="top:630.3px;font-size:12px;line-height:16px;color:#262626;left:-137.2px;width:300px;text-align:center;"><span id="t103">23</span></div>
<div style="left:25.5px;top:187.5px;width:195.0px;height:24.5px;background:#E7E6E6;"></div>
<div style="left:220.5px;top:187.5px;width:910.0px;height:24.5px;background:#9DC3E6;"></div>
<div style="left:1130.5px;top:187.5px;width:213.0px;height:24.5px;background:#E7E6E6;"></div>
<div style="left:25.5px;top:211.5px;width:1318.0px;height:1.0px;background:#111;"></div>
<div style="left:219.9px;top:187.5px;width:1.2px;height:24.5px;background:#222;"></div>
<div style="left:1129.9px;top:187.5px;width:1.2px;height:24.5px;background:#222;"></div>
<div class="t" style="top:191.8px;font-size:14.5px;line-height:16px;color:#000;font-weight:bold;letter-spacing:0.022px;left:-26.5px;width:300px;text-align:center;"><span id="t104">Swapnil Wale</span></div>
<div class="t" style="top:191.8px;font-size:14.5px;line-height:16px;color:#000;font-weight:bold;letter-spacing:0.480px;left:526.0px;width:300px;text-align:center;"><span id="t105">Project BRMS Tech</span></div>
<div class="t" style="top:191.8px;font-size:14.5px;line-height:16px;color:#000;letter-spacing:-0.055px;left:1087.0px;width:300px;text-align:center;"><span id="t106">6/15/2016</span></div>
<div style="left:25.5px;top:627.4px;width:1318.0px;height:1.0px;background:#D4D4D4;"></div>
<div style="left:90.0px;top:627.4px;width:1.0px;height:15.0px;background:#D4D4D4;"></div>
<div style="left:155.0px;top:627.4px;width:1.0px;height:15.0px;background:#D4D4D4;"></div>
<div style="left:220.0px;top:627.4px;width:1.0px;height:15.0px;background:#D4D4D4;"></div>
<div style="left:285.0px;top:627.4px;width:1.0px;height:15.0px;background:#D4D4D4;"></div>
<div style="left:350.0px;top:627.4px;width:1.0px;height:15.0px;background:#D4D4D4;"></div>
<div style="left:415.0px;top:627.4px;width:1.0px;height:15.0px;background:#D4D4D4;"></div>
<div style="left:480.0px;top:627.4px;width:1.0px;height:15.0px;background:#D4D4D4;"></div>
<div style="left:545.0px;top:627.4px;width:1.0px;height:15.0px;background:#D4D4D4;"></div>
<div style="left:610.0px;top:627.4px;width:1.0px;height:15.0px;background:#D4D4D4;"></div>
<div style="left:675.0px;top:627.4px;width:1.0px;height:15.0px;background:#D4D4D4;"></div>
<div style="left:740.0px;top:627.4px;width:1.0px;height:15.0px;background:#D4D4D4;"></div>
<div style="left:805.0px;top:627.4px;width:1.0px;height:15.0px;background:#D4D4D4;"></div>
<div style="left:870.0px;top:627.4px;width:1.0px;height:15.0px;background:#D4D4D4;"></div>
<div style="left:935.0px;top:627.4px;width:1.0px;height:15.0px;background:#D4D4D4;"></div>
<div style="left:1000.0px;top:627.4px;width:1.0px;height:15.0px;background:#D4D4D4;"></div>
<div style="left:1065.0px;top:627.4px;width:1.0px;height:15.0px;background:#D4D4D4;"></div>
<div style="left:1130.0px;top:627.4px;width:1.0px;height:15.0px;background:#D4D4D4;"></div>
<div style="left:1195.0px;top:627.4px;width:1.0px;height:15.0px;background:#D4D4D4;"></div>
<div style="left:1260.0px;top:627.4px;width:1.0px;height:15.0px;background:#D4D4D4;"></div>
<svg style="left:0.0px;top:0.0px;" width="1366" height="692" viewBox="0 0 1366 692"><path d="M184.69 450.15 A98.3 98.3 0 1 1 276.37 337.13 L239.40 342.79 A60.9 60.9 0 1 0 182.60 412.81 Z" fill="#009449" stroke="#fff" stroke-width="1.8"/><path d="M276.37 337.13 A98.3 98.3 0 0 1 277.47 349.43 L240.08 350.41 A60.9 60.9 0 0 0 239.40 342.79 Z" fill="#FFC000" stroke="#fff" stroke-width="1.8"/><path d="M277.47 349.43 A98.3 98.3 0 0 1 184.69 450.15 L182.60 412.81 A60.9 60.9 0 0 0 240.08 350.41 Z" fill="#FF1A00" stroke="#fff" stroke-width="1.8"/><defs><linearGradient id="gns" x1="0" y1="0" x2="0" y2="1"><stop offset="0" stop-color="#3D66AE"/><stop offset="0.5" stop-color="#2452A3"/><stop offset="1" stop-color="#1B4A9C"/></linearGradient><linearGradient id="ggr" x1="0" y1="0" x2="1" y2="1"><stop offset="0" stop-color="#7DB356"/><stop offset="1" stop-color="#5E9A35"/></linearGradient><linearGradient id="gye" x1="0" y1="0" x2="0" y2="1"><stop offset="0" stop-color="#FDC535"/><stop offset="1" stop-color="#FDBA12"/></linearGradient><linearGradient id="gbl" x1="0" y1="0" x2="0" y2="1"><stop offset="0" stop-color="#4C7DD0"/><stop offset="1" stop-color="#2D62C0"/></linearGradient></defs><path d="M500.00 252.20 A99.6 99.6 0 1 1 403.66 377.07 L440.71 367.36 A61.3 61.3 0 1 0 500.00 290.50 Z" fill="url(#gns)" /><path d="M403.66 377.07 A99.6 99.6 0 0 1 400.76 343.29 L438.92 346.56 A61.3 61.3 0 0 0 440.71 367.36 Z" fill="#FFE699" /><path d="M400.76 343.29 A99.6 99.6 0 0 1 456.03 262.43 L472.94 296.80 A61.3 61.3 0 0 0 438.92 346.56 Z" fill="#6587D5" /><path d="M456.03 262.43 A99.6 99.6 0 0 1 500.00 252.20 L500.00 290.50 A61.3 61.3 0 0 0 472.94 296.80 Z" fill="#A3B5E2" /><path d="M387.6 257.6 H396.6 L431.3 302.8" fill="none" stroke="#A6A6A6" stroke-width="1"/><path d="M395 425.5 H403 L420 358" fill="none" stroke="#A6A6A6" stroke-width="1"/><path d="M564 400 L609 427.5 H615" fill="none" stroke="#A6A6A6" stroke-width="1"/><path d="M827.80 248.90 A100.7 100.7 0 0 1 827.80 450.30 L827.80 412.80 A63.2 63.2 0 0 0 827.80 286.40 Z" fill="url(#ggr)" /><path d="M827.80 450.30 A100.7 100.7 0 0 1 736.31 391.68 L770.38 376.01 A63.2 63.2 0 0 0 827.80 412.80 Z" fill="url(#gbl)" /><path d="M736.31 391.68 A100.7 100.7 0 0 1 827.80 248.90 L827.80 286.40 A63.2 63.2 0 0 0 770.38 376.01 Z" fill="url(#gye)" /><path d="M1061.4 361.9 A103.3 102.3 0 0 1 1086.98 294.52 L1161.7 361.9 Z" fill="#009449"/><path d="M1086.98 294.52 A103.3 102.3 0 0 1 1268.0 361.9 L1161.7 361.9 Z" fill="#FFC000"/><path d="M1085.98 293.52 L1162.1000000000001 362.5" stroke="#fff" stroke-width="1.8"/><path d="M741 390.6 V407.4 L744.8 403.8 L747.6 410.2 L750 409.2 L747.2 402.8 L752.6 402.6 Z" fill="#fff" stroke="#000" stroke-width="1" stroke-linejoin="round"/></svg>
<div class="t" style="top:225.7px;font-size:13.3px;line-height:16px;color:#000;font-weight:bold;letter-spacing:-0.023px;left:29.3px;width:300px;text-align:center;"><span id="t107">Schedule Health</span></div>
<div class="t" style="top:223.7px;font-size:13.3px;line-height:16px;color:#000;font-weight:bold;letter-spacing:-0.026px;left:340.5px;width:300px;text-align:center;"><span id="t108">Task Status</span></div>
<div class="t" style="top:222.0px;font-size:13.3px;line-height:16px;color:#000;font-weight:bold;letter-spacing:-0.000px;left:668.5px;width:300px;text-align:center;"><span id="t109">Budget Health</span></div>
<div class="t" style="top:224.7px;font-size:13.3px;line-height:16px;color:#000;font-weight:bold;letter-spacing:-0.058px;left:997.0px;width:300px;text-align:center;"><span id="t110">Resource Health</span></div>
<div class="t" style="top:287.5px;font-size:12px;line-height:16px;color:#14472C;letter-spacing:-0.271px;left:-33.5px;width:300px;text-align:center;"><span id="t111">On Track</span></div>
<div class="t" style="top:301.5px;font-size:12px;line-height:16px;color:#14472C;letter-spacing:-0.674px;left:-33.5px;width:300px;text-align:center;"><span id="t112">74%</span></div>
<div class="t" style="top:323.5px;font-size:12px;line-height:16px;color:#404040;letter-spacing:0.056px;left:152.5px;width:300px;text-align:center;"><span id="t113">Worry</span></div>
<div class="t" style="top:337.5px;font-size:12px;line-height:16px;color:#404040;letter-spacing:-0.700px;left:152.5px;width:300px;text-align:center;"><span id="t114">2%</span></div>
<div class="t" style="top:390.0px;font-size:12px;line-height:16px;color:#B01C0A;letter-spacing:-0.420px;left:87.0px;width:300px;text-align:center;"><span id="t115">Delay</span></div>
<div class="t" style="top:404.0px;font-size:12px;line-height:16px;color:#B01C0A;letter-spacing:-0.674px;left:87.0px;width:300px;text-align:center;"><span id="t116">24%</span></div>
<div class="t" style="top:235.5px;font-size:12px;line-height:16px;color:#404040;letter-spacing:0.132px;left:215.0px;width:300px;text-align:center;"><span id="t117">Almost</span></div>
<div class="t" style="top:249.5px;font-size:12px;line-height:16px;color:#404040;letter-spacing:-0.168px;left:215.0px;width:300px;text-align:center;"><span id="t118">There</span></div>
<div class="t" style="top:263.5px;font-size:12px;line-height:16px;color:#404040;left:215.0px;width:300px;text-align:center;"><span id="t119">9</span></div>
<div class="t" style="top:257.5px;font-size:12px;line-height:16px;color:#2F3E66;letter-spacing:-0.005px;left:332.0px;width:300px;text-align:center;"><span id="t120">Done</span></div>
<div class="t" style="top:271.5px;font-size:12px;line-height:16px;color:#2F3E66;left:332.0px;width:300px;text-align:center;"><span id="t121">4</span></div>
<div class="t" style="top:411.5px;font-size:12px;line-height:16px;color:#404040;letter-spacing:0.039px;left:212.0px;width:300px;text-align:center;"><span id="t122">Half Done</span></div>
<div class="t" style="top:425.5px;font-size:12px;line-height:16px;color:#404040;left:212.0px;width:300px;text-align:center;"><span id="t123">3</span></div>
<div class="t" style="top:405.5px;font-size:12px;line-height:16px;color:#404040;letter-spacing:-0.670px;left:488.5px;width:300px;text-align:center;"><span id="t124">Not</span></div>
<div class="t" style="top:419.5px;font-size:12px;line-height:16px;color:#404040;letter-spacing:-0.003px;left:488.5px;width:300px;text-align:center;"><span id="t125">Started</span></div>
<div class="t" style="top:433.5px;font-size:12px;line-height:16px;color:#404040;letter-spacing:-0.674px;left:488.5px;width:300px;text-align:center;"><span id="t126">39</span></div>
<div class="t" style="top:290.5px;font-size:12px;line-height:16px;color:#1a1a1a;letter-spacing:0.182px;left:607.5px;width:300px;text-align:center;"><span id="t127">Remaining,</span></div>
<div class="t" style="top:304.5px;font-size:12px;line-height:16px;color:#1a1a1a;letter-spacing:0.089px;left:607.5px;width:300px;text-align:center;"><span id="t128">$602,600</span></div>
<div class="t" style="top:334.5px;font-size:12px;line-height:16px;color:#1C2B52;letter-spacing:0.137px;left:759.5px;width:300px;text-align:center;"><span id="t129">Planned,</span></div>
<div class="t" style="top:348.5px;font-size:12px;line-height:16px;color:#1C2B52;letter-spacing:0.089px;left:759.5px;width:300px;text-align:center;"><span id="t130">$945,500</span></div>
<div class="t" style="top:404.5px;font-size:12px;line-height:16px;color:#1F3864;letter-spacing:-0.140px;left:632.0px;width:300px;text-align:center;"><span id="t131">Spend,</span></div>
<div class="t" style="top:418.5px;font-size:12px;line-height:16px;color:#1F3864;letter-spacing:0.089px;left:632.0px;width:300px;text-align:center;"><span id="t132">$342,900</span></div>
<div class="t" style="top:305.5px;font-size:12px;line-height:16px;color:#6B5A1E;letter-spacing:0.048px;left:1032.0px;width:300px;text-align:center;"><span id="t133">Availability</span></div>
<div class="t" style="top:336.5px;font-size:12px;line-height:16px;color:#14472C;letter-spacing:0.047px;left:964.5px;width:300px;text-align:center;"><span id="t134">Utilized</span></div>
<div style="left:25.5px;top:482.3px;width:1318.0px;height:11.3px;background:#9DC3E6;"></div>
<div style="left:25.5px;top:493.6px;width:1318.0px;height:20.0px;background:#DDEBF7;"></div>
<div style="left:25.5px;top:493.0px;width:1318.0px;height:1.3px;background:#111;"></div>
<div style="left:25.5px;top:512.9px;width:1318.0px;height:1.3px;background:#111;"></div>
<div style="left:414.9px;top:493.6px;width:1.2px;height:20.0px;background:#111;"></div>
<div style="left:804.9px;top:493.6px;width:1.2px;height:20.0px;background:#111;"></div>
<div style="left:999.9px;top:493.6px;width:1.2px;height:20.0px;background:#111;"></div>
<div style="left:1194.9px;top:493.6px;width:1.2px;height:20.0px;background:#111;"></div>
<div style="left:415.0px;top:514.0px;width:1.0px;height:113.0px;background:#D4D4D4;"></div>
<div style="left:805.5px;top:514.0px;width:195.0px;height:113.0px;background:#FF7364;"></div>
<div style="left:1000.5px;top:514.0px;width:195.0px;height:113.0px;background:#FFE97F;"></div>
<div style="left:1195.5px;top:514.0px;width:148.0px;height:113.0px;background:#59AE73;"></div>
<div style="left:804.9px;top:514.0px;width:1.2px;height:113.5px;background:#222;"></div>
<div style="left:999.9px;top:514.0px;width:1.2px;height:113.5px;background:#222;"></div>
<div style="left:1194.9px;top:514.0px;width:1.2px;height:113.5px;background:#222;"></div>
<div style="left:805.5px;top:626.6px;width:538.0px;height:1.3px;background:#222;"></div>
<div class="t" style="top:495.6px;font-size:13.3px;line-height:16px;color:#000;font-weight:bold;letter-spacing:-0.418px;left:162.6px;"><span id="t135">Open Risks</span></div>
<div class="t" style="top:495.6px;font-size:13.3px;line-height:16px;color:#000;letter-spacing:-0.695px;left:236.9px;"><span id="t136">(Rating)</span></div>
<div class="t" style="top:495.6px;font-size:13.3px;line-height:16px;color:#000;font-weight:bold;letter-spacing:-0.368px;left:546.5px;"><span id="t137">Open Issues</span></div>
<div class="t" style="top:495.6px;font-size:13.3px;line-height:16px;color:#000;letter-spacing:-0.700px;left:625.8px;"><span id="t138">(Severity)</span></div>
<div class="t" style="top:495.6px;font-size:13.3px;line-height:16px;color:#000;font-weight:bold;letter-spacing:-0.092px;left:753.0px;width:300px;text-align:center;"><span id="t139">Open Action Items</span></div>
<div class="t" style="top:495.6px;font-size:13.3px;line-height:16px;color:#000;font-weight:bold;letter-spacing:-0.110px;left:948.3px;width:300px;text-align:center;"><span id="t140">Open Change Requests</span></div>
<div class="t" style="top:495.6px;font-size:13.3px;line-height:16px;color:#000;font-weight:bold;letter-spacing:-0.085px;left:1119.9px;width:300px;text-align:center;"><span id="t141">Pending Decisions</span></div>
<div class="t" style="left:843.2px;width:120px;text-align:center;top:518.6px;font-size:97px;line-height:110px;font-weight:bold;color:#000;transform:scale(0.968,1.04);">4</div>
<div class="t" style="left:1039.3px;width:120px;text-align:center;top:518.6px;font-size:97px;line-height:110px;font-weight:bold;color:#000;transform:scale(0.968,1.04);">2</div>
<div class="t" style="left:1212.2px;width:120px;text-align:center;top:518.6px;font-size:97px;line-height:110px;font-weight:bold;color:#000;transform:scale(0.968,1.04);">1</div>
<div style="left:1246.0px;top:596.0px;width:21.9px;height:14.0px;background:#59AE73;"></div>
<div style="left:1280.8px;top:596.0px;width:17.0px;height:14.0px;background:#59AE73;"></div>
<div style="left:50.5px;top:532.5px;width:325.5px;height:1.0px;background:#D9D9D9;"></div>
<div style="left:50.5px;top:553.7px;width:325.5px;height:1.0px;background:#D9D9D9;"></div>
<div style="left:50.5px;top:574.9px;width:325.5px;height:1.0px;background:#D9D9D9;"></div>
<div style="left:50.5px;top:596.1px;width:325.5px;height:1.0px;background:#D9D9D9;"></div>
<div style="left:439.7px;top:535.8px;width:345.2px;height:1.0px;background:#D9D9D9;"></div>
<div style="left:439.7px;top:555.9px;width:345.2px;height:1.0px;background:#D9D9D9;"></div>
<div style="left:439.7px;top:576.0px;width:345.2px;height:1.0px;background:#D9D9D9;"></div>
<div style="left:439.7px;top:596.1px;width:345.2px;height:1.0px;background:#D9D9D9;"></div>
<div style="left:160.0px;top:554.2px;width:26.0px;height:42.0px;background:#F58025;"></div>
<div style="left:241.8px;top:575.4px;width:26.2px;height:20.8px;background:#FFC000;"></div>
<div style="left:324.0px;top:575.4px;width:24.8px;height:20.8px;background:#85BF4B;"></div>
<div style="left:469.0px;top:556.0px;width:28.0px;height:40.2px;background:#FF1A00;"></div>
<div style="left:556.0px;top:576.3px;width:27.0px;height:19.9px;background:#F58025;"></div>
<div style="left:642.8px;top:576.3px;width:27.2px;height:19.9px;background:#FFC000;"></div>
<div style="left:729.0px;top:576.3px;width:28.0px;height:19.9px;background:#85BF4B;"></div>
<div class="t" style="top:574.0px;font-size:11px;line-height:16px;color:#404040;left:-59.7px;width:300px;text-align:center;"><span id="t142">0</span></div>
<div class="t" style="top:533.4px;font-size:11px;line-height:16px;color:#404040;left:22.4px;width:300px;text-align:center;"><span id="t143">2</span></div>
<div class="t" style="top:554.0px;font-size:11px;line-height:16px;color:#404040;left:103.2px;width:300px;text-align:center;"><span id="t144">1</span></div>
<div class="t" style="top:554.0px;font-size:11px;line-height:16px;color:#404040;left:185.0px;width:300px;text-align:center;"><span id="t145">1</span></div>
<div class="t" style="top:535.4px;font-size:11px;line-height:16px;color:#404040;left:331.5px;width:300px;text-align:center;"><span id="t146">2</span></div>
<div class="t" style="top:555.3px;font-size:11px;line-height:16px;color:#404040;left:418.4px;width:300px;text-align:center;"><span id="t147">1</span></div>
<div class="t" style="top:555.3px;font-size:11px;line-height:16px;color:#404040;left:504.9px;width:300px;text-align:center;"><span id="t148">1</span></div>
<div class="t" style="top:555.3px;font-size:11px;line-height:16px;color:#404040;left:591.0px;width:300px;text-align:center;"><span id="t149">1</span></div>
<div class="t" style="top:602.8px;font-size:11.5px;line-height:16px;color:#555;letter-spacing:-0.169px;left:-58.4px;width:300px;text-align:center;"><span id="t150">Critical</span></div>
<div class="t" style="top:602.8px;font-size:11.5px;line-height:16px;color:#555;letter-spacing:-0.452px;left:23.4px;width:300px;text-align:center;"><span id="t151">High</span></div>
<div class="t" style="top:602.8px;font-size:11.5px;line-height:16px;color:#555;letter-spacing:0.076px;left:104.9px;width:300px;text-align:center;"><span id="t152">Medium</span></div>
<div class="t" style="top:602.8px;font-size:11.5px;line-height:16px;color:#555;letter-spacing:-0.700px;left:187.0px;width:300px;text-align:center;"><span id="t153">Low</span></div>
<div class="t" style="top:602.8px;font-size:11.5px;line-height:16px;color:#555;letter-spacing:-0.169px;left:332.8px;width:300px;text-align:center;"><span id="t154">Critical</span></div>
<div class="t" style="top:602.8px;font-size:11.5px;line-height:16px;color:#555;letter-spacing:-0.452px;left:420.4px;width:300px;text-align:center;"><span id="t155">High</span></div>
<div class="t" style="top:602.8px;font-size:11.5px;line-height:16px;color:#555;letter-spacing:0.076px;left:506.9px;width:300px;text-align:center;"><span id="t156">Medium</span></div>
<div class="t" style="top:602.8px;font-size:11.5px;line-height:16px;color:#555;letter-spacing:-0.700px;left:593.1px;width:300px;text-align:center;"><span id="t157">Low</span></div>
<div style="left:1344.5px;top:167.0px;width:18.5px;height:475.5px;background:#E9E9E9;"></div>
<div style="left:1348.0px;top:185.0px;width:14.5px;height:406.0px;background:#fff;border:1px solid #C6C6C6;box-sizing:border-box;"></div>
<div style="left:1348.0px;top:591.0px;width:14.5px;height:38.0px;background:#DEDEDE;"></div>
<svg style="left:1348.0px;top:170.0px;" width="15" height="15" viewBox="0 0 15 15"><rect x="0.5" y="0.5" width="13.5" height="14" fill="#fff" stroke="#C6C6C6"/><path d="M3.8 9.5 L7.3 5 L10.8 9.5 Z" fill="#777"/></svg>
<svg style="left:1348.0px;top:628.5px;" width="15" height="15" viewBox="0 0 15 15"><rect x="0.5" y="0.5" width="13.5" height="13.5" fill="#fff" stroke="#C6C6C6"/><path d="M3.8 5.5 L7.3 10 L10.8 5.5 Z" fill="#777"/></svg>
<div style="left:1342.5px;top:187.5px;width:1.4px;height:440.0px;background:#111;"></div>
<div style="left:3.0px;top:642.0px;width:1360.0px;height:28.0px;background:#E6E6E6;"></div>
<div style="left:3.0px;top:642.0px;width:1360.0px;height:1.0px;background:#ABABAB;"></div>
<div style="left:100.0px;top:642.0px;width:92.0px;height:24.0px;background:#fff;"></div>
<div style="left:100.0px;top:665.5px;width:92.0px;height:2.0px;background:#217346;"></div>
<div style="left:191.5px;top:643.0px;width:1.0px;height:23.0px;background:#ABABAB;"></div>
<div class="t" style="top:639.4px;font-size:10.5px;line-height:16px;color:rgba(255,255,255,0.5);letter-spacing:0.019px;left:40.0px;"><span id="t158">www.heritagechristiancollege.com</span></div>
<div class="t" style="top:647.3px;font-size:13px;line-height:16px;color:#1E6B41;font-weight:bold;letter-spacing:-0.332px;left:-4.7px;width:300px;text-align:center;"><span id="t159">Dashboard</span></div>
<div class="t" style="top:647.3px;font-size:13px;line-height:16px;color:#444;letter-spacing:-0.397px;left:79.8px;width:300px;text-align:center;"><span id="t160">Schedule</span></div>
<div class="t" style="top:647.3px;font-size:13px;line-height:16px;color:#444;letter-spacing:0.082px;left:153.6px;width:300px;text-align:center;"><span id="t161">Budget</span></div>
<div class="t" style="top:647.3px;font-size:13px;line-height:16px;color:#444;letter-spacing:-0.267px;left:229.8px;width:300px;text-align:center;"><span id="t162">Resources</span></div>
<div class="t" style="top:647.3px;font-size:13px;line-height:16px;color:#444;letter-spacing:-0.644px;left:300.5px;width:300px;text-align:center;"><span id="t163">Risks</span></div>
<div class="t" style="top:647.3px;font-size:13px;line-height:16px;color:#444;letter-spacing:-0.414px;left:358.5px;width:300px;text-align:center;"><span id="t164">Issues</span></div>
<div class="t" style="top:647.3px;font-size:13px;line-height:16px;color:#444;letter-spacing:-0.272px;left:423.8px;width:300px;text-align:center;"><span id="t165">Actions</span></div>
<div class="t" style="top:647.3px;font-size:13px;line-height:16px;color:#444;letter-spacing:-0.326px;left:523.5px;width:300px;text-align:center;"><span id="t166">Change Requests</span></div>
<div class="t" style="top:647.3px;font-size:13px;line-height:16px;color:#444;letter-spacing:-0.232px;left:629.1px;width:300px;text-align:center;"><span id="t167">Decisions</span></div>
<div class="t" style="top:647.3px;font-size:13px;line-height:16px;color:#444;letter-spacing:-0.010px;left:703.0px;width:300px;text-align:center;"><span id="t168">Config</span></div>
<div class="t" style="top:647.3px;font-size:13px;line-height:16px;color:#444;letter-spacing:-0.277px;left:762.0px;width:300px;text-align:center;"><span id="t169">Data</span></div>
<div style="left:269.5px;top:646.0px;width:1.0px;height:21.0px;background:#ABABAB;"></div>
<div style="left:337.8px;top:646.0px;width:1.0px;height:21.0px;background:#ABABAB;"></div>
<div style="left:423.4px;top:646.0px;width:1.0px;height:21.0px;background:#ABABAB;"></div>
<div style="left:477.7px;top:646.0px;width:1.0px;height:21.0px;background:#ABABAB;"></div>
<div style="left:538.8px;top:646.0px;width:1.0px;height:21.0px;background:#ABABAB;"></div>
<div style="left:609.0px;top:646.0px;width:1.0px;height:21.0px;background:#ABABAB;"></div>
<div style="left:738.0px;top:646.0px;width:1.0px;height:21.0px;background:#ABABAB;"></div>
<div style="left:821.0px;top:646.0px;width:1.0px;height:21.0px;background:#ABABAB;"></div>
<div style="left:886.0px;top:646.0px;width:1.0px;height:21.0px;background:#ABABAB;"></div>
<div style="left:937.8px;top:646.0px;width:1.0px;height:21.0px;background:#ABABAB;"></div>
<svg style="left:20.0px;top:648.0px;" width="50" height="14" viewBox="0 0 50 14"><path d="M11 3.4 L8 7.2 L11 11 Z" fill="#C6C6C6"/><path d="M36.3 3.4 L39.8 7.2 L36.3 11 Z" fill="#C6C6C6"/></svg>
<svg style="left:971.0px;top:647.0px;" width="18" height="18" viewBox="0 0 18 18"><circle cx="9" cy="9" r="7.3" fill="none" stroke="#777" stroke-width="1.1"/><path d="M9 5.2 V12.8 M5.2 9 H12.8" stroke="#777" stroke-width="1.4"/></svg>
<svg style="left:1035.0px;top:649.0px;" width="4" height="14" viewBox="0 0 4 14"><circle cx="2" cy="2" r="1" fill="#999"/><circle cx="2" cy="7" r="1" fill="#999"/><circle cx="2" cy="12" r="1" fill="#999"/></svg>
<div style="left:1067.5px;top:649.0px;width:227.5px;height:14.5px;background:#fff;border:1px solid #C6C6C6;box-sizing:border-box;"></div>
<svg style="left:1053.5px;top:649.0px;" width="15" height="15" viewBox="0 0 15 15"><rect x="0.5" y="0.5" width="14" height="13.5" fill="#fff" stroke="#C6C6C6"/><path d="M9.5 3.8 L5 7.3 L9.5 10.8 Z" fill="#555"/></svg>
<svg style="left:1330.0px;top:649.0px;" width="15" height="15" viewBox="0 0 15 15"><rect x="0.5" y="0.5" width="14" height="13.5" fill="#fff" stroke="#C6C6C6"/><path d="M5.5 3.8 L10 7.3 L5.5 10.8 Z" fill="#555"/></svg>
<div style="left:3.0px;top:670.0px;width:1360.0px;height:19.0px;background:#F3F3F3;"></div>
<div style="left:3.0px;top:670.0px;width:1360.0px;height:1.0px;background:#D0D0D0;"></div>
<div class="t" style="top:672.9px;font-size:10.6px;line-height:16px;color:#444;letter-spacing:-0.281px;left:7.6px;"><span id="t170">Ready</span></div>
<div style="left:1074.0px;top:670.5px;width:38.0px;height:18.5px;background:#C8C8C8;"></div>
<div class="t" style="top:672.6px;font-size:10.6px;line-height:16px;color:#444;letter-spacing:-0.492px;left:1330.6px;"><span id="t171">100%</span></div>
<svg style="left:0.0px;top:660.0px;" width="1366" height="32" viewBox="0 660 1366 32"><rect x="73.6" y="675.6" width="11" height="10.8" fill="#F3F3F3" stroke="#6b6b6b" stroke-width="1"/><rect x="73.6" y="675.3" width="11" height="2.4" fill="#6b6b6b"/><path d="M75.4 680.3 h2 M78.4 680.3 h2 M81.4 680.3 h2 M75.4 682.6 h2 M78.4 682.6 h2 M81.4 682.6 h2 M75.4 684.8 h2 M78.4 684.8 h2 M81.4 684.8 h2" stroke="#6b6b6b" stroke-width="1.1"/><circle cx="74.6" cy="676.8" r="3" fill="#8a8a8a" stroke="#F3F3F3" stroke-width="0.8"/><rect x="1086.6" y="674.4" width="12" height="12" fill="none" stroke="#555" stroke-width="1.1"/><path d="M1090.6 674.4 v12 M1094.6 674.4 v12 M1086.6 678.4 h12 M1086.6 682.4 h12" stroke="#555" stroke-width="1.1"/><rect x="1124.8" y="674.4" width="12.6" height="12" fill="none" stroke="#555" stroke-width="1.1"/><rect x="1127.6" y="677" width="7" height="7" fill="none" stroke="#555" stroke-width="0.9"/><path d="M1129 679.4 h4.2 M1129 681.4 h4.2" stroke="#555" stroke-width="0.8"/><rect x="1162.7" y="674.4" width="12.8" height="12" fill="none" stroke="#555" stroke-width="1.1"/><path d="M1166.6 674.4 v6.2 h5 v-6.2" fill="none" stroke="#555" stroke-width="1"/><rect x="1193.3" y="680.1" width="5.6" height="1.5" fill="#444"/><rect x="1203.4" y="680" width="99.2" height="1" fill="#9a9a9a"/><rect x="1251" y="674.7" width="3.9" height="11.3" fill="#555"/><path d="M1307 680.8 h8 M1311 676.8 v8" stroke="#444" stroke-width="1.5"/></svg>
</div>
</body></html>
